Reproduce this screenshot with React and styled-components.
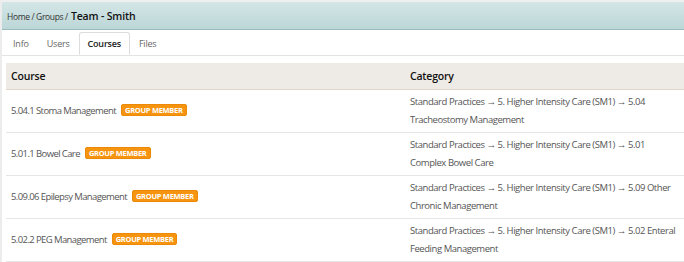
import React from 'react';
import styled, { createGlobalStyle } from 'styled-components';

const GlobalStyle = createGlobalStyle`
  body {
    margin: 0;
    font-family: "Open Sans", "Liberation Sans", sans-serif;
    color: #333;
    background: #fff;
  }
`;

const Page = styled.div`
  width: 684px;
  height: 262px;
  overflow: hidden;
  border-left: 2px solid #ececec;
  border-top: 2px solid #eef0f0;
  box-sizing: border-box;
`;

const TitleBar = styled.div`
  height: 27px;
  display: flex;
  align-items: center;
  padding-left: 5px;
  background: linear-gradient(to bottom, #d4e6e6, #bcd6d7);
  border-bottom: 1px solid #98bbbd;
`;

const Crumb = styled.span`
  font-size: 8.5px;
  color: #333;
  letter-spacing: -0.35px;
  margin-top: 1px;
`;

const Title = styled.span`
  font-size: 10.5px;
  font-weight: 600;
  color: #111;
  letter-spacing: -0.15px;
  margin-left: 3px;
`;

const Tabs = styled.div`
  display: flex;
  padding: 2px 2px 0;
  border-bottom: 1px solid #e3e3e3;
  height: 23px;
`;

const Tab = styled.div`
  padding: 0 8px;
  font-size: 9px;
  letter-spacing: -0.2px;
  line-height: 22px;
  color: ${(p) => (p.active ? '#222' : '#666')};
  font-weight: ${(p) => (p.active ? 600 : 400)};
  border: 1px solid ${(p) => (p.active ? '#dcdcdc' : 'transparent')};
  border-bottom-color: ${(p) => (p.active ? '#fff' : 'transparent')};
  border-radius: 3px 3px 0 0;
  background: #fff;
`;

const Body = styled.div`
  padding: 7px 0 0 4px;
`;

const Table = styled.table`
  border-collapse: collapse;
  width: 100%;
  table-layout: fixed;
`;

const HeadCell = styled.th`
  background: #eeeae5;
  text-align: left;
  font-size: 10.5px;
  letter-spacing: -0.2px;
  font-weight: 600;
  color: #111;
  height: 26px;
  padding: 0 5px;
  border-bottom: 1px solid #e2d6ca;
`;

const Cell = styled.td`
  font-size: 9.5px;
  letter-spacing: ${(p) => (p.wide ? '-0.45px' : '-0.6px')};
  line-height: 18px;
  color: #555;
  padding: 3px 5px;
  height: 36px;
  border-bottom: 1px solid #e6e6e6;
  vertical-align: middle;
`;

const Badge = styled.span`
  display: inline-block;
  margin-left: 5px;
  padding: 0 3px;
  background: #f6940f;
  border: 1px solid #ec8a08;
  color: #fff;
  font-size: 7.5px;
  font-weight: 700;
  letter-spacing: -0.3px;
  line-height: 10px;
  border-radius: 2px;
  vertical-align: 1px;
`;

const courses = [
  { name: '5.04.1 Stoma Management', cat: 'Standard Practices → 5. Higher Intensity Care (SM1) → 5.04 Tracheostomy Management' },
  { name: '5.01.1 Bowel Care', cat: 'Standard Practices → 5. Higher Intensity Care (SM1) → 5.01 Complex Bowel Care' },
  { name: '5.09.06 Epilepsy Management', cat: 'Standard Practices → 5. Higher Intensity Care (SM1) → 5.09 Other Chronic Management' },
  { name: '5.02.2 PEG Management', cat: 'Standard Practices → 5. Higher Intensity Care (SM1) → 5.02 Enteral Feeding Management' },
];

const App = () => (
  <>
    <GlobalStyle />
    <Page>
      <TitleBar>
        <Crumb>Home / Groups /</Crumb>
        <Title>Team - Smith</Title>
      </TitleBar>
      <Tabs>
        <Tab>Info</Tab>
        <Tab>Users</Tab>
        <Tab active>Courses</Tab>
        <Tab>Files</Tab>
      </Tabs>
      <Body>
        <Table>
          <colgroup>
            <col style={{ width: '399px' }} />
            <col />
          </colgroup>
          <thead>
            <tr>
              <HeadCell>Course</HeadCell>
              <HeadCell>Category</HeadCell>
            </tr>
          </thead>
          <tbody>
            {courses.map((c) => (
              <tr key={c.name}>
                <Cell>
                  {c.name}
                  <Badge>GROUP MEMBER</Badge>
                </Cell>
                <Cell wide>{c.cat}</Cell>
              </tr>
            ))}
          </tbody>
        </Table>
      </Body>
    </Page>
  </>
);

export default App;
